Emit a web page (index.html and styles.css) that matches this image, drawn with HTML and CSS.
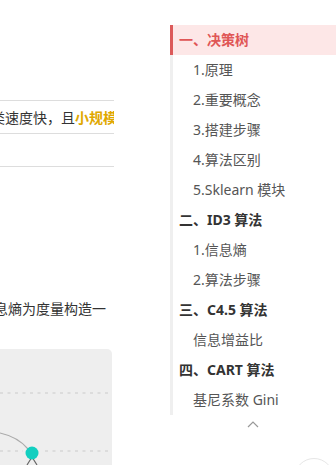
FILE: index.html
```html
<!doctype html>
<html lang="zh-CN">
<head>
  <meta charset="utf-8">
  <meta name="viewport" content="width=device-width, initial-scale=1.0">
  <title>决策树</title>
  <link rel="stylesheet" href="styles.css">
</head>
<body>

<div class="page">
  <main class="content">
    <table class="compare">
      <tr><td><span class="cut">类速度快，且<b class="hl">小规模数据</b></span></td></tr>
      <tr><td></td></tr>
    </table>

    <p class="para"><span class="cut">息熵为度量构造一</span></p>

    <div class="chart">
      <svg width="112" height="116" viewBox="0 0 112 116">
        <line x1="0" y1="44" x2="112" y2="44" class="grid"/>
        <line x1="0" y1="102" x2="23" y2="102" class="grid"/>
        <line x1="45" y1="102" x2="112" y2="102" class="grid"/>
        <path d="M0 84 Q18 88 28 100" class="edge"/>
        <path d="M32 108 L27 116 M32 108 L37 116" class="stem"/>
        <circle cx="32" cy="104" r="6.5" class="node"/>
      </svg>
    </div>
  </main>

  <aside class="toc">
    <ul class="toc-list">
      <li class="top active">一、决策树</li>
      <li class="sub">1.原理</li>
      <li class="sub">2.重要概念</li>
      <li class="sub">3.搭建步骤</li>
      <li class="sub">4.算法区别</li>
      <li class="sub">5.Sklearn 模块</li>
      <li class="top">二、ID3 算法</li>
      <li class="sub">1.信息熵</li>
      <li class="sub">2.算法步骤</li>
      <li class="top">三、C4.5 算法</li>
      <li class="sub">信息增益比</li>
      <li class="top">四、CART 算法</li>
      <li class="sub">基尼系数 Gini</li>
    </ul>
    <div class="toc-fold">
      <svg width="12" height="7" viewBox="0 0 12 7"><path d="M1 6 L6 1 L11 6" fill="none" stroke="#999" stroke-width="1.2"/></svg>
    </div>
  </aside>

  <div class="to-top"></div>
</div>

</body>
</html>
```

FILE: styles.css
```css
body {
  margin: 0;
  font-family: "Noto Sans", "Noto Sans CJK SC", sans-serif;
  color: #333;
  background: #fff;
}

.page {
  position: relative;
  display: flex;
  width: 336px;
  height: 465px;
  overflow: hidden;
}

.content {
  width: 114px;
  flex: none;
  overflow: hidden;
  padding-top: 100px;
}

.compare {
  border-collapse: collapse;
  width: 114px;
}

.compare td {
  height: 32px;
  padding: 0;
  border-top: 1px solid #ddd;
  border-bottom: 1px solid #ddd;
  font-size: 14px;
  white-space: nowrap;
}

.cut {
  display: block;
  margin-left: -9px;
  white-space: nowrap;
}

.hl {
  color: #e0a800;
}

.para {
  margin: 130px 0 0;
  font-size: 14px;
  line-height: 24px;
  margin-left: 3px;
}

.chart {
  margin-top: 28px;
  width: 112px;
  height: 116px;
  background: #eee;
  border-radius: 0 5px 0 0;
}

.chart svg {
  display: block;
}

.grid {
  stroke: #d6d6d6;
  stroke-width: 1.5;
  stroke-dasharray: 3 4.5;
}

.edge {
  fill: none;
  stroke: #aaa;
  stroke-width: 1.2;
}

.stem {
  stroke: #666;
  stroke-width: 1.2;
}

.node {
  fill: #12cfc0;
}

.toc {
  margin-left: 56px;
  width: 166px;
  padding-top: 25px;
}

.toc-list {
  list-style: none;
  margin: 0;
  padding: 0;
  border-left: 3px solid #efefef;
}

.toc-list li {
  height: 30px;
  line-height: 30px;
  font-size: 14px;
  color: #555;
  white-space: nowrap;
}

.toc-list .top {
  padding-left: 6px;
  font-weight: bold;
  color: #333;
}

.toc-list .sub {
  padding-left: 20px;
}

.toc-list .active {
  margin-left: -3px;
  border-left: 3px solid #dc5a5a;
  background: #fde7e7;
  color: #e05656;
  font-weight: 600;
}

.toc-fold {
  display: flex;
  justify-content: center;
  padding-top: 6px;
}

.to-top {
  position: absolute;
  left: 294px;
  top: 458px;
  width: 38px;
  height: 38px;
  border: 1px solid #e6e6e6;
  border-radius: 50%;
  background: #fff;
}
```
